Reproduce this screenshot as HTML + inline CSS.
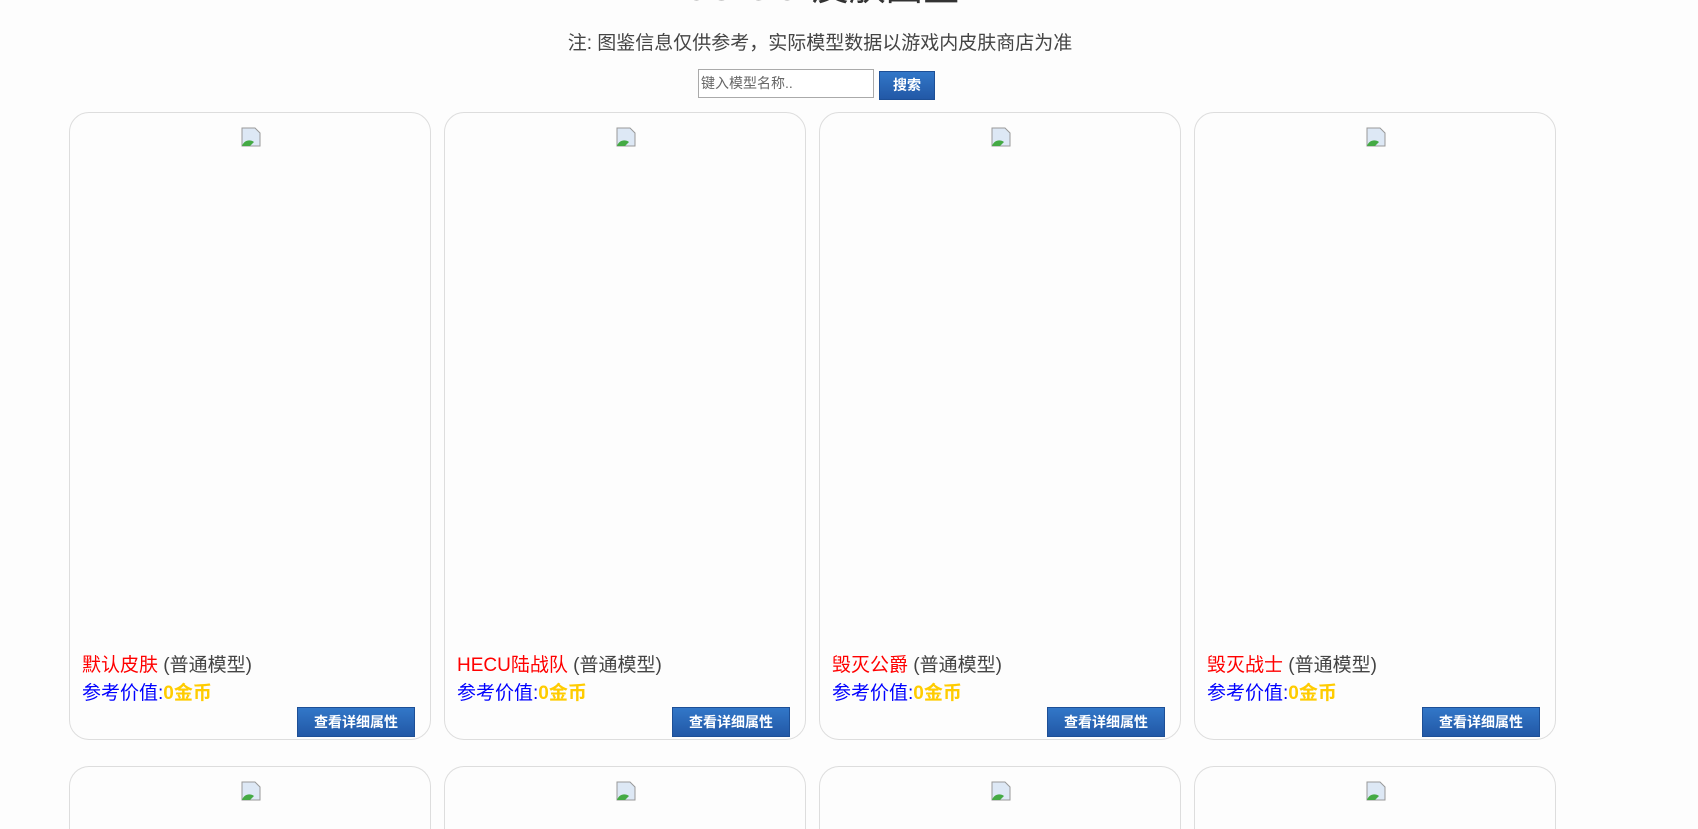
<!DOCTYPE html>
<html><head><meta charset="utf-8"><style>
*{margin:0;padding:0;box-sizing:border-box}
html,body{width:1698px;height:829px;overflow:hidden;background:#fdfdfd;font-family:"Liberation Sans","Noto Sans CJK SC",sans-serif;color:#444}
body{position:relative}
.title{position:absolute;left:0;width:1642px;top:-31px;text-align:center;font-size:37px;line-height:37px;color:#333}
.sub{position:absolute;left:0;width:1640px;top:32px;text-align:center;font-size:19px;line-height:24px;color:#444}
.inp{position:absolute;left:698px;top:69px;width:176px;height:29px;border:1px solid #aaa;background:#fff;font-size:14px;color:#666;padding:5px 2px;line-height:17px}
.btn{position:absolute;background:linear-gradient(#3277c8,#2258a6);border:1px solid #1d4f96;color:#fff;font-weight:bold;font-size:14px;text-align:center}
.card{position:absolute;width:362px;height:628px;border:1px solid #ddd;border-radius:20px;background:#fdfdfd}
.card.s{height:63px;border-bottom:none;border-radius:20px 20px 0 0}
.ic{position:absolute;left:171px;top:14px;width:20px;height:20px}
.n{position:absolute;left:12px;top:541px;font-size:19px;line-height:24px;white-space:nowrap}
.p{position:absolute;left:12px;top:569px;font-size:19px;line-height:24px;color:#00f}
.p b{color:#fc0}
.r{color:#f00}
</style></head><body>
<div class="title">CS:GO 皮肤图鉴</div>
<div class="sub">注: 图鉴信息仅供参考，实际模型数据以游戏内皮肤商店为准</div>
<div class="inp">键入模型名称..</div>
<div class="btn" style="left:879px;top:71px;width:56px;height:29px;line-height:27px">搜索</div>
<div class="card" style="left:69px;top:112px"><svg class="ic" viewBox="0 0 20 20"><path d="M1 1h13l5 5v13H1z" fill="#dde8f5" stroke="#999"/><path d="M1 19c2-6 8-7 12-4l-4 4z" fill="#4a4"/></svg><div class="n"><span class="r">默认皮肤</span> (普通模型)</div><div class="p">参考价值:<b>0金币</b></div><div class="btn" style="left:227px;top:594px;width:118px;height:30px;line-height:28px">查看详细属性</div></div>
<div class="card" style="left:444px;top:112px"><svg class="ic" viewBox="0 0 20 20"><path d="M1 1h13l5 5v13H1z" fill="#dde8f5" stroke="#999"/><path d="M1 19c2-6 8-7 12-4l-4 4z" fill="#4a4"/></svg><div class="n"><span class="r">HECU陆战队</span> (普通模型)</div><div class="p">参考价值:<b>0金币</b></div><div class="btn" style="left:227px;top:594px;width:118px;height:30px;line-height:28px">查看详细属性</div></div>
<div class="card" style="left:819px;top:112px"><svg class="ic" viewBox="0 0 20 20"><path d="M1 1h13l5 5v13H1z" fill="#dde8f5" stroke="#999"/><path d="M1 19c2-6 8-7 12-4l-4 4z" fill="#4a4"/></svg><div class="n"><span class="r">毁灭公爵</span> (普通模型)</div><div class="p">参考价值:<b>0金币</b></div><div class="btn" style="left:227px;top:594px;width:118px;height:30px;line-height:28px">查看详细属性</div></div>
<div class="card" style="left:1194px;top:112px"><svg class="ic" viewBox="0 0 20 20"><path d="M1 1h13l5 5v13H1z" fill="#dde8f5" stroke="#999"/><path d="M1 19c2-6 8-7 12-4l-4 4z" fill="#4a4"/></svg><div class="n"><span class="r">毁灭战士</span> (普通模型)</div><div class="p">参考价值:<b>0金币</b></div><div class="btn" style="left:227px;top:594px;width:118px;height:30px;line-height:28px">查看详细属性</div></div>
<div class="card s" style="left:69px;top:766px"><svg class="ic" viewBox="0 0 20 20"><path d="M1 1h13l5 5v13H1z" fill="#dde8f5" stroke="#999"/><path d="M1 19c2-6 8-7 12-4l-4 4z" fill="#4a4"/></svg></div>
<div class="card s" style="left:444px;top:766px"><svg class="ic" viewBox="0 0 20 20"><path d="M1 1h13l5 5v13H1z" fill="#dde8f5" stroke="#999"/><path d="M1 19c2-6 8-7 12-4l-4 4z" fill="#4a4"/></svg></div>
<div class="card s" style="left:819px;top:766px"><svg class="ic" viewBox="0 0 20 20"><path d="M1 1h13l5 5v13H1z" fill="#dde8f5" stroke="#999"/><path d="M1 19c2-6 8-7 12-4l-4 4z" fill="#4a4"/></svg></div>
<div class="card s" style="left:1194px;top:766px"><svg class="ic" viewBox="0 0 20 20"><path d="M1 1h13l5 5v13H1z" fill="#dde8f5" stroke="#999"/><path d="M1 19c2-6 8-7 12-4l-4 4z" fill="#4a4"/></svg></div>
</body></html>
